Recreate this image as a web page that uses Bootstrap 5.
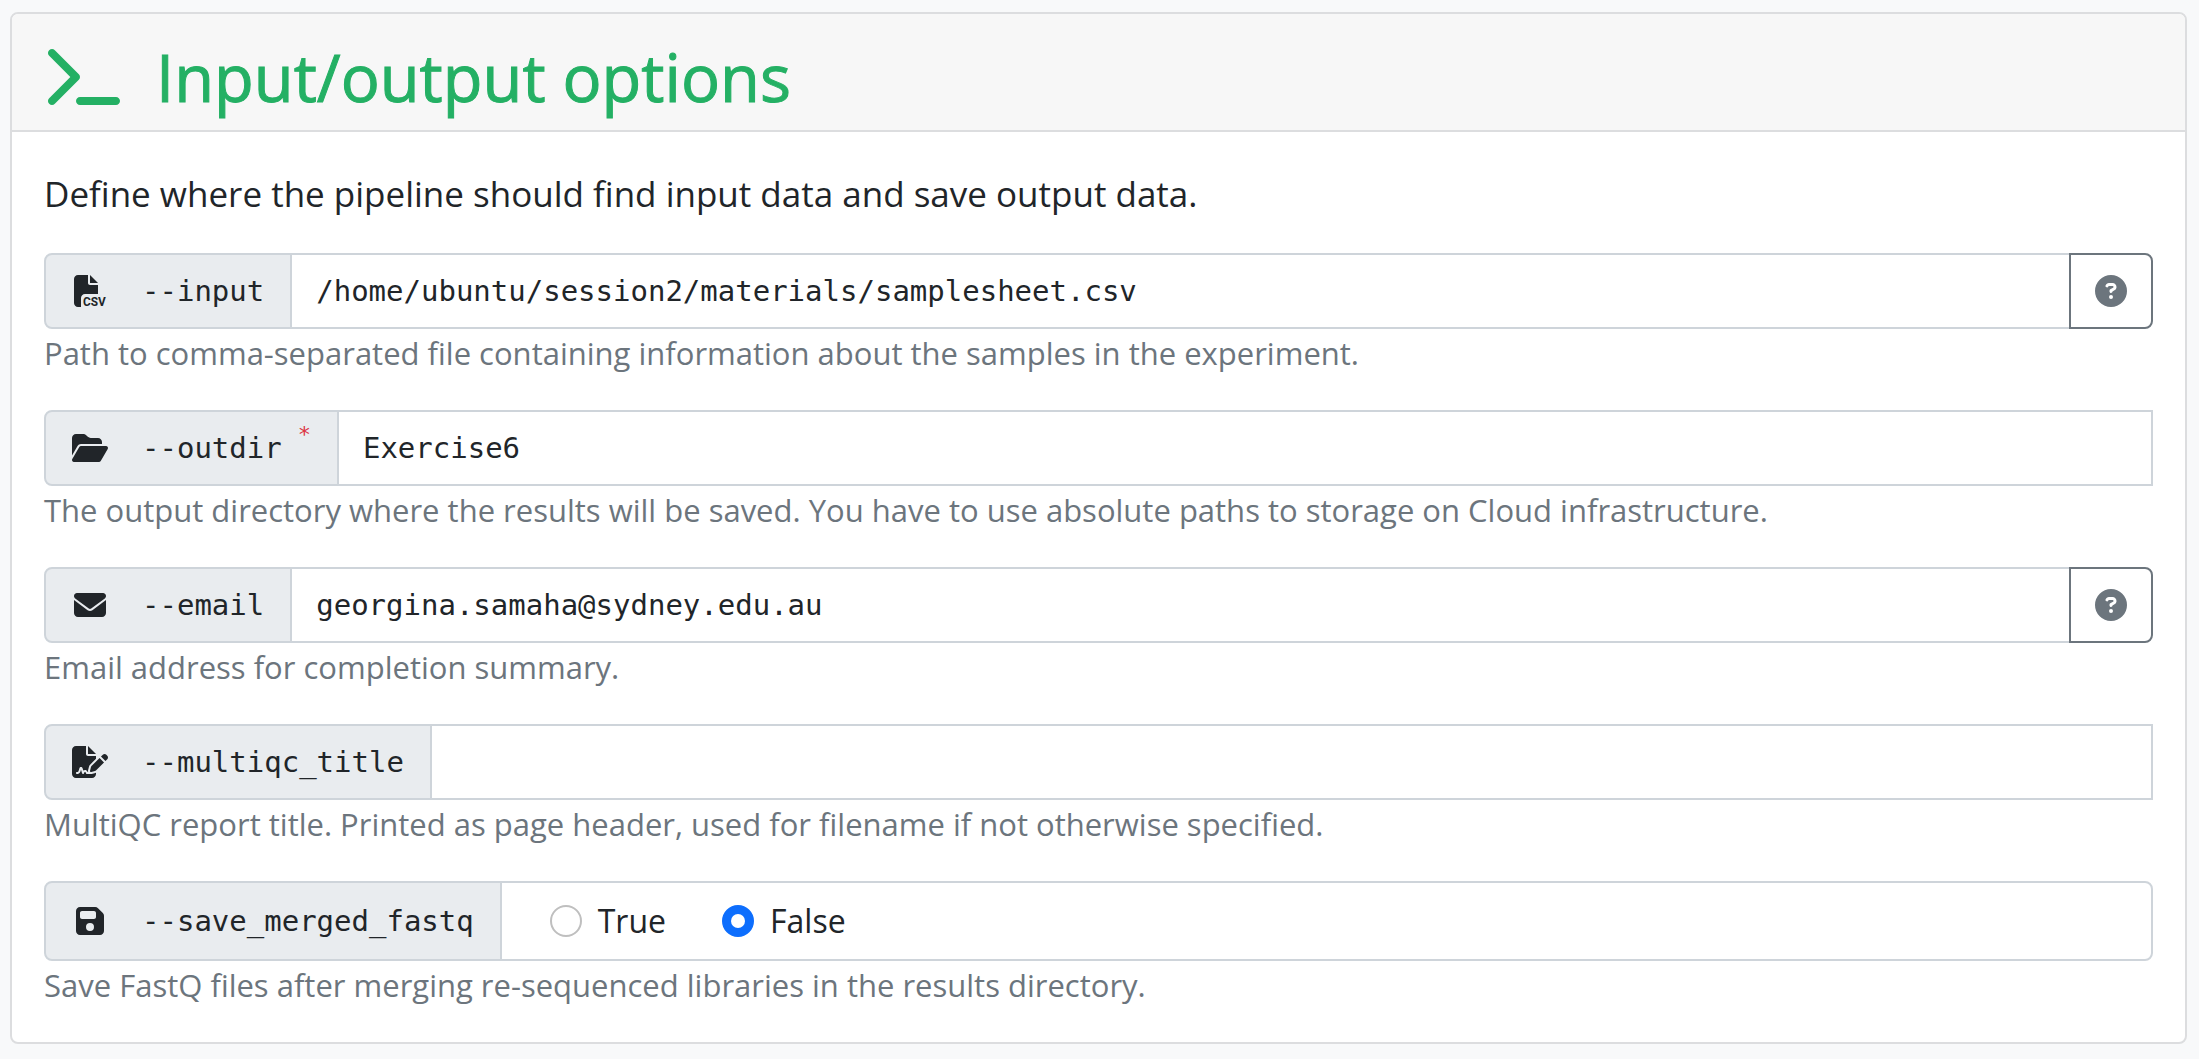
<!DOCTYPE html>
<html lang="en">
<head>
<meta charset="utf-8">
<meta name="viewport" content="width=device-width, initial-scale=1">
<title>Input/output options</title>
<link rel="stylesheet" href="https://cdn.jsdelivr.net/npm/bootstrap@5.3.0/dist/css/bootstrap.min.css">
<style>
:root { font-size: 32px; --bs-border-width: 2px; --bs-border-radius: 8px; --bs-body-font-family: "Open Sans", "Noto Sans", sans-serif; --bs-font-monospace: "DejaVu Sans Mono", "Liberation Mono", monospace; }
body { background: #f8f9fa; padding: 12px 12px 12px 10px; line-height: 48px; }
.option-card { --bs-card-border-width: 2px; --bs-card-border-radius: 8px; --bs-card-inner-border-radius: 6px; --bs-card-border-color: #dcdddf; --bs-card-cap-bg: #f7f7f7; --bs-card-bg: #fff; }
.option-card .card-header { padding: 25px 32px 15px; }
.option-card .card-body { padding: 32px 32px 33px; }
.section-title { color: #24b064; font-size: 65px; font-weight: 500; -webkit-text-stroke: 1px #24b064; line-height: 76px; gap: 32px; }
.intro-text { font-size: 35px; line-height: 60px; margin-bottom: 29px; }
.ico { display: block; flex: none; width: 40px; height: 32px; fill: currentColor; overflow: visible; }
.ico-title { width: 80px; height: 64px; }
.input-group-text, .form-control { border-color: #ced4da; border-width: 2px; color: #212529; padding: 12px 24px; line-height: 48px; font-size: 29px; border-radius: 8px; }
.input-group-text { background: #e9ecef; gap: 32px; padding-right: 26px; }
.input-group > .form-control { margin-left: -2px; height: 76px; }
.input-group > .btn { margin-left: -2px; border-width: 2px; padding: 12px 24px; border-radius: 8px; }
.input-group > .btn .ico { width: 32px; }
.required-mark { font-size: 22px; line-height: 22px; margin: 0 0 26px -16px; }
.help-line { font-size: 31px; line-height: 48px; color: #6c757d; margin-bottom: 33px; }
.input-group > .choice-box { font-size: 32px; height: 80px; gap: 56px; padding: 0 48px; }
.choice-item { gap: 16px; }
.form-check-input { width: 32px; height: 32px; border: 2px solid #bfbfbf; }
.form-check-input:checked { border-color: #0d6efd; background-color: #0d6efd; }
</style>
<script src="https://cdn.jsdelivr.net/npm/bootstrap@5.3.0/dist/js/bootstrap.bundle.min.js"></script>
</head>
<body>
<main class="card option-card">
  <div class="card-header">
    <h2 class="section-title mb-0 d-flex align-items-center">
      <svg class="ico ico-title" viewBox="0 0 576 512" aria-hidden="true"><path d="M9.4 86.6C-3.1 74.1-3.1 53.9 9.4 41.4s32.8-12.5 45.3 0l192 192c12.5 12.5 12.5 32.8 0 45.3l-192 192c-12.5 12.5-32.8 12.5-45.3 0s-12.5-32.8 0-45.3L178.7 256 9.4 86.6zM256 416H544c17.7 0 32 14.3 32 32s-14.3 32-32 32H256c-17.7 0-32-14.3-32-32s14.3-32 32-32z"/></svg>
      Input/output options
    </h2>
  </div>
  <form class="card-body">
    <p class="intro-text">Define where the pipeline should find input data and save output data.</p>

    <div class="input-group">
      <label class="input-group-text font-monospace" for="input">
        <svg class="ico" viewBox="0 0 512 512" aria-hidden="true"><path d="M0 64C0 28.7 28.7 0 64 0H224V128c0 17.7 14.3 32 32 32H384V304H176c-35.3 0-64 28.7-64 64V512H64c-35.3 0-64-28.7-64-64V64zm384 64H256V0L384 128z"/><text x="145" y="500" font-family="Roboto, Liberation Sans, sans-serif" font-weight="700" font-size="190">CSV</text></svg>
        --input
      </label>
      <input class="form-control font-monospace" id="input" type="text" value="/home/ubuntu/session2/materials/samplesheet.csv">
      <button class="btn btn-outline-secondary" type="button" aria-label="Help for --input">
        <svg class="ico" viewBox="0 0 512 512" aria-hidden="true"><path d="M256 512A256 256 0 1 0 256 0a256 256 0 1 0 0 512zM169.8 165.3c7.9-22.3 29.1-37.3 52.8-37.3h58.3c34.9 0 63.1 28.3 63.1 63.1c0 22.6-12.1 43.5-31.7 54.8L280 264.4c-.2 13-10.9 23.6-24 23.6c-13.3 0-24-10.7-24-24V250.5c0-8.6 4.6-16.5 12.1-20.8l44.3-25.4c4.7-2.7 7.6-7.7 7.6-13.1c0-8.4-6.8-15.1-15.1-15.1H222.6c-3.4 0-6.4 2.1-7.5 5.3l-.4 1.2c-4.4 12.5-18.2 19-30.6 14.6s-19-18.2-14.6-30.6l.4-1.2zM224 352a32 32 0 1 1 64 0 32 32 0 1 1 -64 0z"/></svg>
      </button>
    </div>
    <p class="help-line">Path to comma-separated file containing information about the samples in the experiment.</p>

    <div class="input-group">
      <label class="input-group-text font-monospace" for="outdir">
        <svg class="ico" viewBox="0 0 576 512" aria-hidden="true"><path d="M88.7 223.8L0 375.8V96C0 60.7 28.7 32 64 32H181.5c17 0 33.3 6.7 45.3 18.7l26.5 26.5c12 12 28.3 18.7 45.3 18.7H416c35.3 0 64 28.7 64 64v32H144c-22.8 0-43.8 12.1-55.3 31.8zm27.6 16.1C122.1 230 132.6 224 144 224H544c11.5 0 22 6.1 27.7 16.1s5.7 22.2-.1 32.1l-112 192C453.9 474 443.4 480 432 480H32c-11.5 0-22-6.1-27.7-16.1s-5.7-22.2 .1-32.1l112-192z"/></svg>
        --outdir <span class="required-mark text-danger">*</span>
      </label>
      <input class="form-control font-monospace rounded-0" id="outdir" type="text" value="Exercise6" required>
    </div>
    <p class="help-line">The output directory where the results will be saved. You have to use absolute paths to storage on Cloud infrastructure.</p>

    <div class="input-group">
      <label class="input-group-text font-monospace" for="email">
        <svg class="ico" viewBox="0 0 512 512" aria-hidden="true"><path d="M48 64C21.5 64 0 85.5 0 112c0 15.1 7.1 29.3 19.2 38.4L236.8 313.6c11.4 8.5 27 8.5 38.4 0L492.8 150.4c12.1-9.1 19.2-23.3 19.2-38.4c0-26.5-21.5-48-48-48H48zM0 176V384c0 35.3 28.7 64 64 64H448c35.3 0 64-28.7 64-64V176L294.4 339.2c-22.8 17.1-54 17.1-76.8 0L0 176z"/></svg>
        --email
      </label>
      <input class="form-control font-monospace" id="email" type="email" value="georgina.samaha@sydney.edu.au">
      <button class="btn btn-outline-secondary" type="button" aria-label="Help for --email">
        <svg class="ico" viewBox="0 0 512 512" aria-hidden="true"><path d="M256 512A256 256 0 1 0 256 0a256 256 0 1 0 0 512zM169.8 165.3c7.9-22.3 29.1-37.3 52.8-37.3h58.3c34.9 0 63.1 28.3 63.1 63.1c0 22.6-12.1 43.5-31.7 54.8L280 264.4c-.2 13-10.9 23.6-24 23.6c-13.3 0-24-10.7-24-24V250.5c0-8.6 4.6-16.5 12.1-20.8l44.3-25.4c4.7-2.7 7.6-7.7 7.6-13.1c0-8.4-6.8-15.1-15.1-15.1H222.6c-3.4 0-6.4 2.1-7.5 5.3l-.4 1.2c-4.4 12.5-18.2 19-30.6 14.6s-19-18.2-14.6-30.6l.4-1.2zM224 352a32 32 0 1 1 64 0 32 32 0 1 1 -64 0z"/></svg>
      </button>
    </div>
    <p class="help-line">Email address for completion summary.</p>

    <div class="input-group">
      <label class="input-group-text font-monospace" for="multiqc_title">
        <svg class="ico" viewBox="0 0 576 512" aria-hidden="true"><path d="M64 0C28.7 0 0 28.7 0 64V448c0 35.3 28.7 64 64 64H320c35.3 0 64-28.7 64-64V428.7c-2.7 1.1-5.4 2-8.2 2.7l-60.1 15c-3 .7-6 1.2-9 1.4c-.9 .1-1.8 .2-2.7 .2H240c-6.1 0-11.6-3.4-14.3-8.8l-8.8-17.7c-1.7-3.4-5.1-5.5-8.8-5.5s-7.2 2.1-8.8 5.5l-8.8 17.7c-2.9 5.9-9.2 9.4-15.7 8.8s-12.1-5.1-13.9-11.3L144 381l-9.8 32.8c-6.1 20.3-24.8 34.2-46 34.2H80c-8.8 0-16-7.2-16-16s7.2-16 16-16h8.2c7.1 0 13.3-4.6 15.3-11.4l14.9-49.5c3.4-11.3 13.8-19.1 25.6-19.1s22.2 7.8 25.6 19.1l11.6 38.6c7.4-6.2 16.8-9.7 26.8-9.7c15.9 0 30.4 9 37.5 23.2l4.4 8.8h8.9c-3.1-8.8-3.7-18.4-1.4-27.8l15-60.1c2.8-11.3 8.6-21.5 16.8-29.7L384 203.6V160H256c-17.7 0-32-14.3-32-32V0H64zM256 0V128H384L256 0zM549.8 139.7c-15.6-15.6-40.9-15.6-56.6 0l-29.4 29.4 71 71 29.4-29.4c15.6-15.6 15.6-40.9 0-56.6l-14.4-14.4zM311.9 321c-4.1 4.1-7 9.2-8.4 14.9l-15 60.1c-1.4 5.5 .2 11.2 4.2 15.2s9.7 5.6 15.2 4.2l60.1-15c5.6-1.4 10.8-4.3 14.9-8.4L512.1 262.7l-71-71L311.9 321z"/></svg>
        --multiqc_title
      </label>
      <input class="form-control font-monospace rounded-0" id="multiqc_title" type="text">
    </div>
    <p class="help-line">MultiQC report title. Printed as page header, used for filename if not otherwise specified.</p>

    <div class="input-group" role="radiogroup" aria-labelledby="save_label">
      <span class="input-group-text font-monospace" id="save_label">
        <svg class="ico" viewBox="0 0 448 512" aria-hidden="true"><path d="M64 32C28.7 32 0 60.7 0 96V416c0 35.3 28.7 64 64 64H384c35.3 0 64-28.7 64-64V173.3c0-17-6.7-33.3-18.7-45.3L352 50.7C340 38.7 323.7 32 306.7 32H64zm0 96c0-17.7 14.3-32 32-32H288c17.7 0 32 14.3 32 32v64c0 17.7-14.3 32-32 32H96c-17.7 0-32-14.3-32-32V128zM224 288a64 64 0 1 1 0 128 64 64 0 1 1 0-128z"/></svg>
        --save_merged_fastq
      </span>
      <div class="form-control choice-box d-flex align-items-center">
        <div class="choice-item d-flex align-items-center">
          <input class="form-check-input m-0" type="radio" name="save_merged_fastq" id="save_true">
          <label for="save_true">True</label>
        </div>
        <div class="choice-item d-flex align-items-center">
          <input class="form-check-input m-0" type="radio" name="save_merged_fastq" id="save_false" checked>
          <label for="save_false">False</label>
        </div>
      </div>
    </div>
    <p class="help-line mb-0">Save FastQ files after merging re-sequenced libraries in the results directory.</p>
  </form>
</main>
</body>
</html>
